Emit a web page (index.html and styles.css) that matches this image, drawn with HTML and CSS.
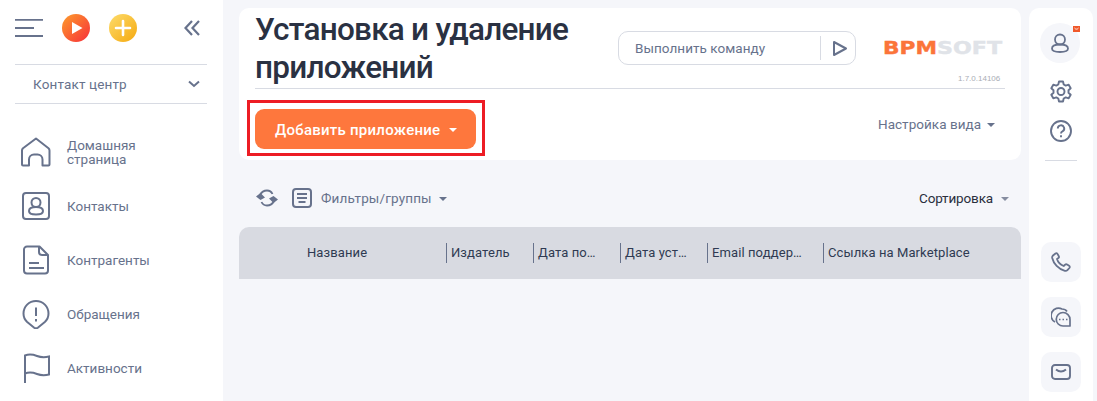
FILE: index.html
```html
<!DOCTYPE html>
<html lang="ru">
<head>
<meta charset="utf-8">
<title>Установка и удаление приложений</title>
<link rel="stylesheet" href="styles.css">
</head>
<body>
<div class="app">
  <aside class="sidebar">
    <div class="side-top">
      <svg class="burger" width="28" height="18" viewBox="0 0 28 18"><path d="M0 .8h28M0 9h19M0 17h28" stroke="#67728c" stroke-width="2" fill="none"/></svg>
      <svg class="round" width="28" height="28" viewBox="0 0 28 28"><defs><linearGradient id="g1" x1="0" y1="0" x2="1" y2="1"><stop offset="0" stop-color="#fd9d2c"/><stop offset="1" stop-color="#f72e3a"/></linearGradient></defs><circle cx="14" cy="14" r="14" fill="url(#g1)"/><path d="M10 8v12l10.500-6z" fill="#fff"/></svg>
      <svg class="round plus" width="28" height="28" viewBox="0 0 28 28"><defs><linearGradient id="g2" x1="0" y1="0" x2="1" y2="1"><stop offset="0" stop-color="#fddc6c"/><stop offset="1" stop-color="#f5a90f"/></linearGradient></defs><circle cx="14" cy="14" r="14" fill="url(#g2)"/><path d="M14 7v14M7 14h14" stroke="#fff" stroke-width="2.600" stroke-linecap="round"/></svg>
      <svg class="collapse" width="16" height="16" viewBox="0 0 16 16"><path d="M8 1 1.500 8 8 15M15 1 8.500 8 15 15" stroke="#67728c" stroke-width="2.200" fill="none"/></svg>
    </div>
    <div class="workspace">
      <span>Контакт центр</span>
      <svg width="12" height="8" viewBox="0 0 12 8"><path d="M1 1.500 6 6l5-4.500" stroke="#67728c" stroke-width="2" fill="none"/></svg>
    </div>
    <nav class="nav">
      <a class="nav-item">
        <svg width="30" height="30" viewBox="0 0 30 30"><path d="M2 28.500a1 1 0 0 1-1-1V13.500a3 3 0 0 1 1-2.300L15 1.500l12.500 9.700a3 3 0 0 1 1 2.300v14a1 1 0 0 1-1 1h-6v-6a5 5 0 0 0-5-5h-3.500a5 5 0 0 0-5 5v6z" fill="none" stroke="#67728c" stroke-width="2" stroke-linejoin="round"/></svg>
        <span>Домашняя<br>страница</span>
      </a>
      <a class="nav-item">
        <svg width="30" height="30" viewBox="0 0 30 30"><rect x="2" y="2" width="26" height="26" rx="3" fill="none" stroke="#67728c" stroke-width="2"/><circle cx="15" cy="11.500" r="4.500" fill="none" stroke="#67728c" stroke-width="2"/><path d="M15 16c-5 0-7 1.500-7 4s2 3.500 7 3.500 7-1 7-3.500-2-4-7-4z" fill="none" stroke="#67728c" stroke-width="2"/></svg>
        <span>Контакты</span>
      </a>
      <a class="nav-item">
        <svg width="30" height="30" viewBox="0 0 30 30"><path d="M6 1.500h12.500L27 10v15.500a3 3 0 0 1-3 3H6a3 3 0 0 1-3-3v-21a3 3 0 0 1 3-3z" fill="none" stroke="#67728c" stroke-width="2" stroke-linejoin="round"/><path d="M18 2v5a3 3 0 0 0 3 3h5.500M8 18h10M8 23h15" fill="none" stroke="#67728c" stroke-width="2"/></svg>
        <span>Контрагенты</span>
      </a>
      <a class="nav-item">
        <svg width="30" height="30" viewBox="0 0 30 30"><path d="M15 2C8 2 2.500 7.500 2.500 14.500c0 3.500 1.500 6.500 3.700 8.500l7 5.700a3 3 0 0 0 3.600 0l7-5.700c2.200-2 3.700-5 3.700-8.500C27.500 7.500 22 2 15 2z" fill="none" stroke="#67728c" stroke-width="2"/><path d="M15 8.500v8.500M15 20v2.500" stroke="#67728c" stroke-width="2" fill="none"/></svg>
        <span>Обращения</span>
      </a>
      <a class="nav-item">
        <svg width="30" height="30" viewBox="0 0 30 30"><path d="M4 30V2.500c4-1.500 8-1 12 .5 4 1.500 8 1.500 12 .5v18c-4 1-8 1-12-.5-4-1.500-8-2-12-.5" fill="none" stroke="#67728c" stroke-width="2"/></svg>
        <span>Активности</span>
      </a>
    </nav>
  </aside>

  <main class="content">
    <section class="card">
      <div class="card-head">
        <h1 class="title">Установка и удаление приложений</h1>
        <div class="command">
          <span class="command-text">Выполнить команду</span>
          <span class="command-run">
            <svg width="16" height="17" viewBox="0 0 16 17"><path d="M2 2v13l12-6.500z" fill="none" stroke="#67728c" stroke-width="2" stroke-linejoin="round"/></svg>
          </span>
        </div>
        <div class="brand">
          <svg class="logo" width="120" height="22" viewBox="0 0 120 22"><text x="0" y="16.500" textLength="54" lengthAdjust="spacingAndGlyphs" class="logo-a">BPM</text><text x="54" y="16.500" textLength="65" lengthAdjust="spacingAndGlyphs" class="logo-b">SOFT</text></svg>
          <span class="version">1.7.0.14106</span>
        </div>
      </div>
      <div class="card-actions">
        <div class="highlight">
          <button class="add-btn">Добавить приложение<i class="caret caret-white"></i></button>
        </div>
        <div class="view-setup">Настройка вида<i class="caret"></i></div>
      </div>
    </section>

    <div class="toolbar">
      <svg class="refresh" width="22" height="18" viewBox="0 0 22 18"><path d="M4 6C5.500 3 8.500 1.500 11 1.500c2.500 0 4.500 1.300 5.500 3.500M18 12c-1.500 3-4.500 4.500-7 4.500-2.500 0-4.500-1.300-5.500-3.500" fill="none" stroke="#67728c" stroke-width="1.800"/><path d="M0 7.500 4.500 4 9 8.500 4.500 11zM22 10.500 17.500 14 13 9.500 17.500 7z" fill="#67728c"/></svg>
      <svg class="filter-icon" width="20" height="20" viewBox="0 0 20 20"><rect x="1" y="1" width="18" height="18" rx="3" fill="none" stroke="#67728c" stroke-width="2"/><path d="M5 6h10M5 10h10M6.500 14h7" stroke="#67728c" stroke-width="2"/></svg>
      <span class="filters">Фильтры/группы<i class="caret"></i></span>
      <span class="sort">Сортировка<i class="caret"></i></span>
    </div>

    <div class="thead">
      <div class="th th-name">Название</div>
      <div class="th th-a">Издатель</div>
      <div class="th th-a">Дата по…</div>
      <div class="th th-a">Дата уст…</div>
      <div class="th th-b">Email поддер…</div>
      <div class="th th-c">Ссылка на Marketplace</div>
    </div>
  </main>

  <aside class="rail">
    <div class="avatar">
      <svg width="20" height="20" viewBox="0 0 20 20"><circle cx="10" cy="6.500" r="5" fill="none" stroke="#67728c" stroke-width="1.800"/><path d="M10 11.500c-5 0-8 1.500-8 4s3 3.500 8 3.500 8-1 8-3.500-3-4-8-4z" fill="none" stroke="#67728c" stroke-width="1.800"/></svg>
      <svg class="badge" width="7" height="6" viewBox="0 0 7 6"><rect width="7" height="6" fill="#f0582a"/><path d="M1.500 2c1 1.500 3 1.500 4 0" stroke="#fff" stroke-width=".9" fill="none"/></svg>
    </div>
    <svg class="rail-icon" width="22" height="23" viewBox="0 0 22 23"><path d="M9 1.500h4l.7 3 2 1.100 3-.9 2 3.500-2.200 2.100v2.400l2.200 2.100-2 3.500-3-.9-2 1.100-.7 3H9l-.7-3-2-1.100-3 .9-2-3.500 2.200-2.100v-2.400L1.300 8.200l2-3.500 3 .9 2-1.100z" fill="none" stroke="#67728c" stroke-width="1.900" stroke-linejoin="round"/><circle cx="11" cy="11.500" r="3.500" fill="none" stroke="#67728c" stroke-width="1.900"/></svg>
    <svg class="rail-icon help" width="22" height="22" viewBox="0 0 22 22"><circle cx="11" cy="11" r="10" fill="none" stroke="#67728c" stroke-width="1.900"/><path d="M7.800 8.500a3.200 3.200 0 1 1 4.700 2.800c-1 .6-1.500 1.100-1.500 2.200" fill="none" stroke="#67728c" stroke-width="1.900"/><path d="M11 15.200v2" stroke="#67728c" stroke-width="1.900"/></svg>
    <div class="rail-sep"></div>
    <div class="rail-btns">
      <div class="rail-btn"><svg width="20" height="20" viewBox="0 0 20 20"><path d="M2 3.500 4.500 1.500c.7-.5 1.500-.3 2 .4l1.300 2.300c.4.7.2 1.400-.4 1.900L6 7c.8 2.700 3.700 5.800 6.700 7l1.400-1.300c.6-.5 1.300-.6 2-.2l2 1.300c.8.500.9 1.500.3 2.200l-2 2.200c-.7.700-1.600.8-2.500.6C7.500 17.200 2.500 11.500 1.200 6c-.2-1 .1-1.900.8-2.500z" fill="none" stroke="#67728c" stroke-width="1.800" stroke-linejoin="round"/></svg></div>
      <div class="rail-btn"><svg width="20" height="20" viewBox="0 0 20 20"><path d="M4 15A7 7 0 0 1 11 2c2 0 4 1 5 2.500" fill="none" stroke="#67728c" stroke-width="1.700"/><path d="M12 5.500a7 7 0 0 1 7 7v6.500h-7a6.700 6.700 0 0 1 0-13.500z" fill="none" stroke="#67728c" stroke-width="1.700" stroke-linejoin="round"/><path d="M8 12.500h1.500M11.500 12.500H13M15 12.500h1.500" stroke="#67728c" stroke-width="1.700"/></svg></div>
      <div class="rail-btn"><svg width="20" height="16" viewBox="0 0 20 16"><rect x="1" y="1" width="18" height="14" rx="3" fill="none" stroke="#67728c" stroke-width="1.900"/><path d="M5 5.500c3 2.500 7 2.500 10 0" fill="none" stroke="#67728c" stroke-width="1.900"/></svg></div>
    </div>
  </aside>
</div>
</body>
</html>
```
FILE: styles.css
```css
* { box-sizing: border-box; }
html, body { height: 100%; }
body {
  margin: 0;
  background: #f5f6fa;
  font-family: Roboto, "Noto Sans", sans-serif;
  color: #67728c;
  overflow: hidden;
}
.app { display: flex; height: 401px; overflow: hidden; }

.sidebar {
  width: 223px;
  flex: none;
  background: #fff;
  padding: 14px 16px 0 15px;
}
.side-top { display: flex; align-items: center; height: 28px; }
.burger { margin-right: 19px; }
.plus { margin-left: 19px; }
.collapse { margin-left: 47px; }

.workspace {
  margin-top: 22px;
  height: 40px;
  border-top: 1px solid #d8dbe3;
  border-bottom: 1px solid #d8dbe3;
  display: flex;
  align-items: center;
  justify-content: space-between;
  padding: 0 7px 0 18px;
  font-size: 13.500px;
  letter-spacing: .15px;
}
.nav { margin-top: 21px; display: flex; flex-direction: column; }
.nav-item {
  height: 54px;
  display: flex;
  align-items: center;
  gap: 16px;
  padding-left: 5px;
  font-size: 13.500px;
  line-height: 14px;
}
.nav-item svg { flex: none; margin-left: 1px; width: 30px; }

.content { width: 782px; margin-left: 16px; flex: none; padding-top: 8px; }
.card { background: #fff; border-radius: 10px; height: 152px; padding: 0 16px; }
.card-head {
  height: 81px;
  border-bottom: 1px solid #d8dbe3;
  display: flex;
}
.title {
  margin: 3px 0 0 0;
  width: 363px;
  flex: none;
  font-size: 31.500px;
  line-height: 38px;
  font-weight: 500;
  color: #2a3142;
  letter-spacing: -.75px;
}
.command {
  margin-top: 23px;
  width: 238px;
  height: 34px;
  flex: none;
  border: 1px solid #d8dbe3;
  border-radius: 10px;
  display: flex;
  align-items: center;
  font-size: 13.500px;
  letter-spacing: .05px;
}
.command-text { flex: 1; padding-left: 16px; }
.command-run {
  width: 35px;
  height: 24px;
  border-left: 1px solid #d8dbe3;
  display: flex;
  align-items: center;
  padding-left: 11px;
}
.brand { margin-left: 27px; padding-top: 29px; width: 121px; }
.logo { display: block; overflow: visible; }
.logo-a, .logo-b { font-family: "DejaVu Sans", sans-serif; font-weight: 700; font-size: 18px; stroke-width: .4px; }
.logo-a { fill: #fb7439; stroke: #fb7439; }
.logo-b { fill: #e0e3e8; stroke: #e0e3e8; }
.version {
  display: block;
  margin-top: 15px;
  margin-left: 75px;
  font-family: "Liberation Sans", sans-serif;
  font-size: 8px;
  line-height: 10px;
  color: #a9adb5;
  white-space: nowrap;
}

.card-actions {
  display: flex;
  justify-content: space-between;
  margin-left: -8px;
  padding-top: 11px;
}
.highlight {
  border: 3px solid #ed1c24;
  padding: 6px 6px 4px 5px;
  height: 56px;
}
.add-btn {
  display: flex;
  align-items: center;
  width: 221px;
  height: 40px;
  padding: 2px 0 0 20px;
  border: 0;
  border-radius: 9px;
  background: #fe773d;
  color: #fff;
  font: 500 15px Roboto, sans-serif;
  letter-spacing: .25px;
}
.caret {
  display: inline-block;
  width: 0;
  height: 0;
  margin-left: 7px;
  border-left: 4px solid transparent;
  border-right: 4px solid transparent;
  border-top: 4px solid #67728c;
  vertical-align: 2px;
}
.caret-white { border-top-color: #fff; margin-left: 9px; }
.view-setup { font-size: 13.500px; padding: 16px 10px 0 0; letter-spacing: .03px; }
.view-setup .caret { margin-left: 6px; }

.toolbar {
  height: 67px;
  display: flex;
  align-items: center;
  padding: 9px 12px 0 17px;
  font-size: 13.500px;
  letter-spacing: .15px;
}
.filter-icon { margin-left: 14px; }
.filters { margin-left: 9px; flex: 1; }
.sort { color: #2a2f3d; letter-spacing: -.15px; }
.sort .caret { margin-left: 8px; border-top-color: #868da0; }

.thead {
  height: 52px;
  background: #d8dae1;
  border-radius: 10px 10px 0 0;
  display: flex;
  align-items: center;
  font-size: 13px;
  letter-spacing: .1px;
  color: #2f3a52;
}
.th { height: 20px; line-height: 20px; padding-left: 4px; border-left: 1px solid #67728c; white-space: nowrap; }
.th-name { width: 207px; border-left: 0; padding-left: 68px; }
.th-a { width: 87px; }
.th-b { width: 116px; }
.th-c { flex: 1; }

.rail {
  width: 64px;
  flex: none;
  margin-left: 8px;
  margin-top: 8px;
  background: #fff;
  border-radius: 10px 10px 0 0;
  display: flex;
  flex-direction: column;
  align-items: center;
  padding: 15px 0 0 0;
}
.avatar {
  width: 40px;
  height: 40px;
  margin-left: -2px;
  border-radius: 50%;
  background: #f5f6fa;
  display: flex;
  align-items: center;
  justify-content: center;
  position: relative;
}
.badge {
  position: absolute;
  right: 0;
  top: 3px;
}
.rail-icon { margin-top: 17px; flex: none; }
.rail-sep { width: 32px; height: 1px; background: #d8dbe3; margin-top: 18px; }
.rail-btns { margin-top: 81px; display: flex; flex-direction: column; gap: 15px; }
.rail-btn {
  width: 40px;
  height: 40px;
  border-radius: 10px;
  background: #f5f6fa;
  display: flex;
  align-items: center;
  justify-content: center;
}
```
